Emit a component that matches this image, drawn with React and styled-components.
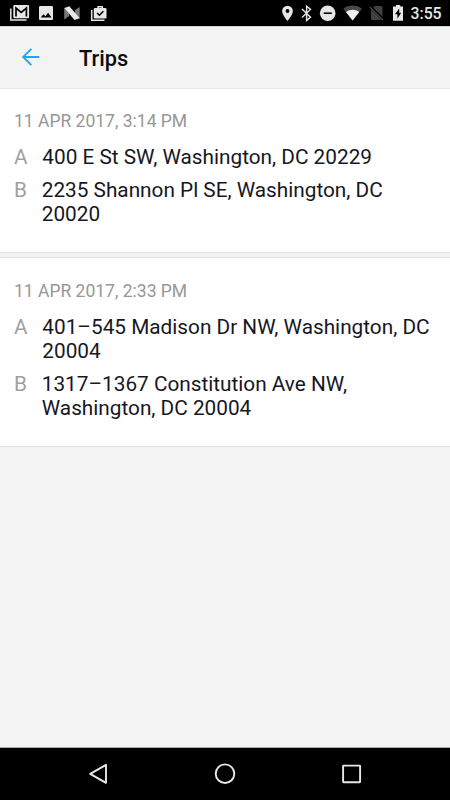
import React from 'react';
import styled, { createGlobalStyle } from 'styled-components';

const GlobalStyle = createGlobalStyle`
  * {
    box-sizing: border-box;
  }

  body {
    margin: 0;
    background-color: #f3f3f3;
    font-family: Roboto, sans-serif;
  }
`;

const Screen = styled.div`
  display: flex;
  flex-direction: column;
  width: 100%;
  height: 100vh;
  overflow: hidden;
  background-color: #f3f3f3;
`;

const StatusBar = styled.div`
  display: flex;
  flex: none;
  justify-content: space-between;
  height: 26px;
  background-color: #000;
  color: #e6e6e6;
`;

const StatusIcons = styled.svg`
  display: block;
  flex: none;
`;

const StatusRight = styled.div`
  display: flex;
`;

const Clock = styled.span`
  width: 40px;
  padding-left: 0.5px;
  font-size: 15.8px;
  font-weight: 500;
  line-height: 28px;
  white-space: nowrap;
`;

const Header = styled.header`
  display: flex;
  flex: none;
  align-items: center;
  height: 63px;
  padding-left: 21px;
  border-top: 1px solid #d6d6d6;
  border-bottom: 1px solid #e6e6e6;
`;

const BackButton = styled.button`
  display: flex;
  width: 58px;
  padding: 0 0 2px;
  border: none;
  background: none;
`;

const Title = styled.h1`
  margin: 2px 0 0;
  color: #0c0c0e;
  font-size: 21.8px;
  font-weight: 500;
  line-height: 28px;
`;

const TripList = styled.main`
  display: flex;
  flex: 1;
  flex-direction: column;
  gap: 4px;
`;

const TripCard = styled.section`
  height: ${props => props.$height}px;
  padding: ${props => (props.$first ? 22 : 23)}px 0 0 14px;
  background-color: #fff;
  border-top: ${props => (props.$first ? 'none' : '1px solid #e3e3e3')};
  border-bottom: 1px solid #e3e3e3;
`;

const TripDate = styled.div`
  margin-bottom: 14px;
  color: #979797;
  font-size: 17.5px;
  line-height: 20px;
`;

const Stop = styled.div`
  display: flex;
  margin-bottom: 9px;
  font-size: 20.78px;
  line-height: 24px;
`;

const StopLabel = styled.span`
  flex: none;
  margin-right: 14.8px;
  color: #9f9f9f;
`;

const Address = styled.span`
  color: #17171f;
  white-space: pre-line;
`;

const NavBar = styled.nav`
  flex: none;
  height: 53px;
  border-top: 1px solid #a8a8a8;
  background-color: #000;
`;

const trips = [
  {
    date: '11 APR 2017, 3:14 PM',
    height: 164,
    from: '400 E St SW, Washington, DC 20229',
    to: '2235 Shannon Pl SE, Washington, DC\n20020',
  },
  {
    date: '11 APR 2017, 2:33 PM',
    height: 190,
    from: '401–545 Madison Dr NW, Washington, DC\n20004',
    to: '1317–1367 Constitution Ave NW,\nWashington, DC 20004',
  },
];

const NotificationIcons = () => (
  <StatusIcons width="110" height="26" viewBox="0 0 110 26">
    {/* gmail */}
    <path d="M10.8 8.5V20H26.5" fill="none" stroke="#e6e6e6" strokeWidth="1.5" />
    <rect x="13.3" y="5" width="15.8" height="13.2" rx="1.2" fill="#e6e6e6" />
    <path d="M16 16.6V8L21.2 12.5L26.4 8V16.6" fill="none" stroke="#000" strokeWidth="1.7" />
    {/* picture */}
    <rect x="39" y="6" width="14" height="14" rx="1.2" fill="#e6e6e6" />
    <path d="M40.8 17.6L43.4 14.2L45.4 16.3L48.1 12.8L51.5 17.6Z" fill="#000" />
    {/* android n */}
    <path d="M64.2 7.8L69.2 12V16L64.2 19.5Z" fill="#777" />
    <path d="M79.7 7V18.5L75 15.5V10Z" fill="#777" />
    <path d="M64.4 8L69.3 6.2L79.8 18.2L74.5 20Z" fill="#e6e6e6" />
    {/* work done */}
    <path d="M91.7 10V20.3H104.5" fill="none" stroke="#e6e6e6" strokeWidth="1.5" />
    <path d="M98 9V6.7H102.3V9" fill="none" stroke="#e6e6e6" strokeWidth="1.5" />
    <rect x="93.8" y="8" width="12.7" height="10.5" rx="1.2" fill="#e6e6e6" />
    <path d="M97 13L99.4 15.2L103.4 11.2" fill="none" stroke="#000" strokeWidth="1.6" />
  </StatusIcons>
);

const SystemIcons = () => (
  <StatusIcons width="130" height="26" viewBox="280 0 130 26">
    {/* location */}
    <path
      d="M287.5 5.7A5.4 5.4 0 0 0 282.1 11.1C282.1 15 287.5 21 287.5 21S292.9 15 292.9 11.1A5.4 5.4 0 0 0 287.5 5.7Z"
      fill="#e6e6e6"
    />
    <circle cx="287.5" cy="11" r="1.9" fill="#000" />
    {/* bluetooth */}
    <path d="M302 9L310.5 17.2L306.6 20.4V6.2L310.5 9.4L302 17.6" fill="none" stroke="#e6e6e6" strokeWidth="1.4" />
    {/* do not disturb */}
    <circle cx="327.7" cy="13.2" r="7.8" fill="#e6e6e6" />
    <path d="M323.7 13.2H331.8" stroke="#000" strokeWidth="1.6" />
    {/* wifi */}
    <path d="M343.3 8.7C348.7 4.5 356.5 4.5 361.9 8.7L352.6 20.4Z" fill="#484848" />
    <path d="M346 12.1C350 9 355.2 9 359.2 12.1L352.6 20.4Z" fill="#f0f0f0" />
    {/* no sim */}
    <path d="M374.8 6H381.2Q382.5 6 382.5 7.3V16.8L373.2 7.6Z" fill="#404040" />
    <path d="M371 9.4L381.7 20H372.2Q371 20 371 18.8Z" fill="#404040" />
    <path d="M370.6 6.4L383.3 19.2" stroke="#000" strokeWidth="1.3" />
    <path d="M369.8 7L383 20.2" stroke="#4c4c4c" strokeWidth="1.1" />
    {/* battery */}
    <path d="M396 5H400.2V6.5H403V20.8H393V6.5H396Z" fill="#e6e6e6" />
    <path d="M399.2 8.6L395 14.2H397.4V18.7L401.2 12.8H399.2Z" fill="#000" />
  </StatusIcons>
);

const BackArrow = () => (
  <svg width="20" height="18" viewBox="0 0 20 18" fill="none" stroke="#24a5ee" strokeWidth="1.8">
    <path d="M1.8 9H18.3M10.4 .8L2.1 9L10.4 17.2" />
  </svg>
);

const NavIcons = () => (
  <svg width="450" height="52" viewBox="0 748 450 52" fill="none" stroke="#e8e8e8" strokeWidth="1.9">
    <path d="M106 764.8V782.8L90.2 773.8Z" strokeLinejoin="round" />
    <circle cx="225" cy="773.7" r="9.3" />
    <rect x="343.1" y="765.6" width="17" height="16.6" rx=".5" />
  </svg>
);

const Trip = ({ trip, first }) => (
  <TripCard $height={trip.height} $first={first}>
    <TripDate>{trip.date}</TripDate>
    <Stop>
      <StopLabel>A</StopLabel>
      <Address>{trip.from}</Address>
    </Stop>
    <Stop>
      <StopLabel>B</StopLabel>
      <Address>{trip.to}</Address>
    </Stop>
  </TripCard>
);

const App = () => {
  return (
    <Screen>
      <GlobalStyle />
      <StatusBar>
        <NotificationIcons />
        <StatusRight>
          <SystemIcons />
          <Clock>3:55</Clock>
        </StatusRight>
      </StatusBar>
      <Header>
        <BackButton aria-label="Back">
          <BackArrow />
        </BackButton>
        <Title>Trips</Title>
      </Header>
      <TripList>
        {trips.map((trip, index) => (
          <Trip key={trip.date} trip={trip} first={index === 0} />
        ))}
      </TripList>
      <NavBar>
        <NavIcons />
      </NavBar>
    </Screen>
  );
};

export default App;
